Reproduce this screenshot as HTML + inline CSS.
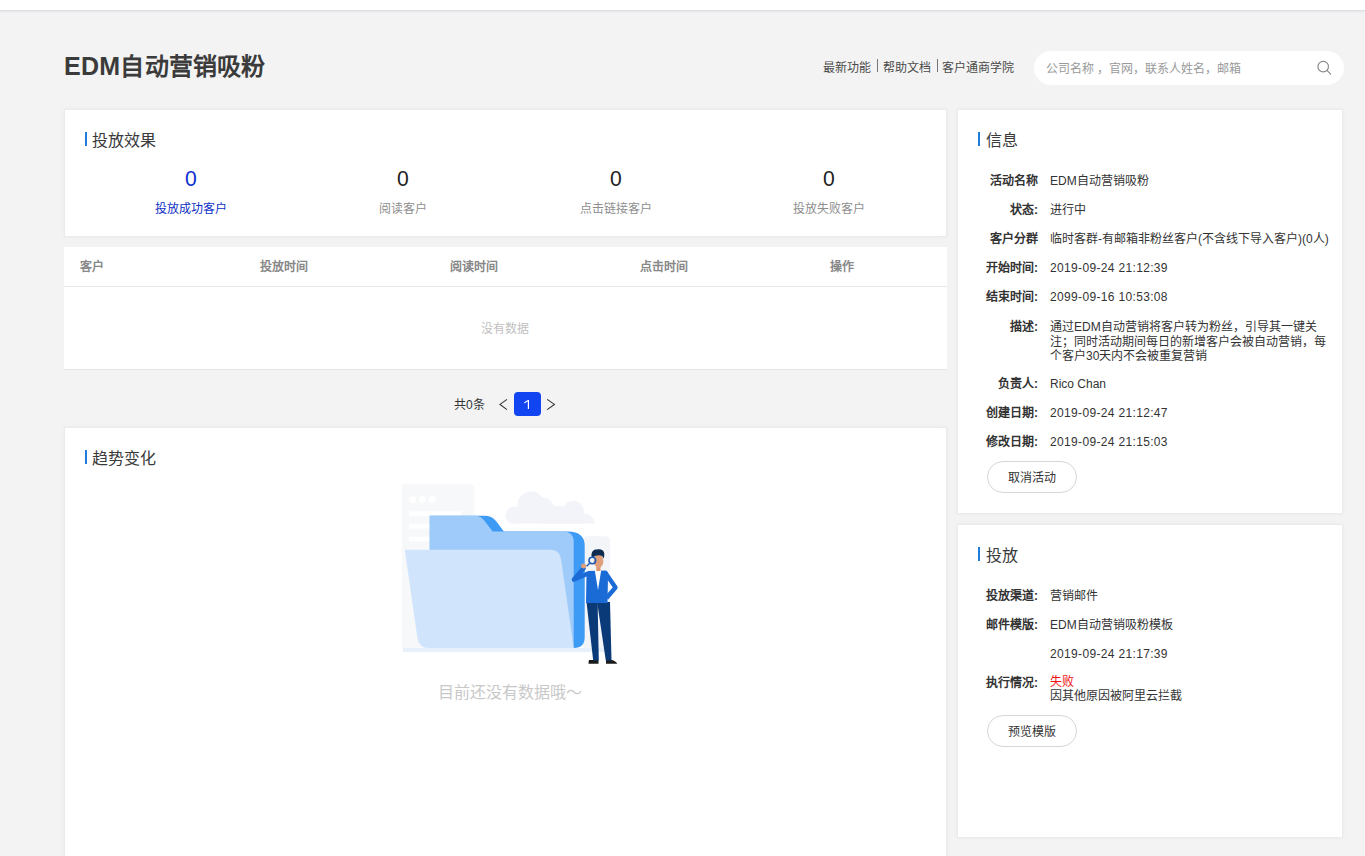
<!DOCTYPE html>
<html lang="zh-CN"><head><meta charset="utf-8">
<style>
*{box-sizing:border-box;margin:0;padding:0}
html,body{width:1365px;height:856px;overflow:hidden;background:#f3f3f3;font-family:"Liberation Sans",sans-serif;color:#333}
.abs{position:absolute}
.topbar{position:absolute;left:0;top:0;width:1365px;height:11px;background:#fff;border-bottom:1px solid #d9dee7;box-shadow:0 1px 3px rgba(0,0,0,0.06)}
.title{position:absolute;left:64px;top:50px;font-size:24px;font-weight:bold;color:#3b3b3b;line-height:34px;white-space:nowrap;letter-spacing:0.2px}
.links{position:absolute;top:60px;font-size:12px;line-height:16px;color:#4a4a4a;white-space:nowrap}
.sep{position:absolute;top:59px;width:1px;height:13px;background:#777}
.search{position:absolute;left:1034px;top:51px;width:310px;height:34px;border-radius:17px;background:#fff}
.search .ph{position:absolute;left:12px;top:10px;font-size:12px;line-height:16px;color:#999;white-space:nowrap}
.card{position:absolute;background:#fff;border:1px solid #ebebeb;box-shadow:0 0 4px rgba(0,0,0,0.04)}
.ct{position:absolute;font-size:16px;line-height:20px;color:#3a3a3a;white-space:nowrap}
.bar{position:absolute;width:2px;height:14px;background:#1f7ddc}
.num{position:absolute;width:212px;text-align:center;font-size:22px;line-height:24px;color:#222;transform:scaleX(0.96)}
.lab{position:absolute;width:212px;text-align:center;font-size:12px;line-height:16px;color:#8e8e8e}
.th{position:absolute;top:259px;font-size:12px;line-height:16px;font-weight:bold;color:#888;white-space:nowrap}
.row{position:absolute;left:958px;width:384px;height:16px;font-size:12px;line-height:16px}
.row .k{position:absolute;right:304px;font-weight:bold;color:#333;white-space:nowrap}
.row .v{position:absolute;left:92px;color:#333;white-space:nowrap}
.btn{position:absolute;left:987px;width:90px;height:32px;border:1px solid #d6d6d6;border-radius:16px;font-size:12px;line-height:32px;text-align:center;color:#333;background:#fff}
</style></head><body>
<div class="topbar"></div>
<div class="title"><span style="font-size:25px;letter-spacing:0.3px;line-height:0">EDM</span>自动营销吸粉</div>
<div class="links" style="left:823px">最新功能</div>
<div class="sep" style="left:877px"></div>
<div class="links" style="left:883px">帮助文档</div>
<div class="sep" style="left:937px"></div>
<div class="links" style="left:942px">客户通商学院</div>
<div class="search"><div class="ph">公司名称 ，官网，联系人姓名，邮箱</div>
<svg class="abs" style="left:282px;top:9px" width="18" height="18" viewBox="0 0 18 18"><circle cx="7.2" cy="6.6" r="5.3" fill="none" stroke="#8a8a8a" stroke-width="1.2"/><line x1="10.9" y1="10.4" x2="14.7" y2="14.2" stroke="#8a8a8a" stroke-width="1.2" stroke-linecap="round"/></svg>
</div>

<!-- card 1 -->
<div class="card" style="left:64px;top:109px;width:883px;height:128px"></div>
<div class="bar" style="left:85px;top:132px"></div>
<div class="ct" style="left:92px;top:131px">投放效果</div>
<div class="num" style="left:85px;top:167px;color:#0b2fcf">0</div>
<div class="num" style="left:297px;top:167px">0</div>
<div class="num" style="left:510px;top:167px">0</div>
<div class="num" style="left:723px;top:167px">0</div>
<div class="lab" style="left:85px;top:201px;color:#0d30c4">投放成功客户</div>
<div class="lab" style="left:297px;top:201px">阅读客户</div>
<div class="lab" style="left:510px;top:201px">点击链接客户</div>
<div class="lab" style="left:723px;top:201px">投放失败客户</div>

<!-- table -->
<div class="abs" style="left:64px;top:247px;width:883px;height:123px;background:#fff;border-bottom:1px solid #e6e6e6"></div>
<div class="abs" style="left:64px;top:286px;width:883px;height:1px;background:#e8e8e8"></div>
<div class="th" style="left:80px">客户</div>
<div class="th" style="left:260px">投放时间</div>
<div class="th" style="left:450px">阅读时间</div>
<div class="th" style="left:640px">点击时间</div>
<div class="th" style="left:830px">操作</div>
<div class="abs" style="left:481px;top:321px;font-size:12px;line-height:16px;color:#bfbfbf">没有数据</div>

<!-- pagination -->
<div class="abs" style="left:454px;top:397px;font-size:12px;line-height:16px;color:#333">共0条</div>
<svg class="abs" style="left:497px;top:397px" width="12" height="18" viewBox="0 0 12 18"><polyline points="10,2.4 3,7.4 10,12.6" fill="none" stroke="#333" stroke-width="1.1"/></svg>
<div class="abs" style="left:514px;top:392px;width:27px;height:24px;border-radius:4px;background:#1145f2"><svg class="abs" style="left:0;top:0" width="27" height="24" viewBox="0 0 27 24"><path d="M13.8,8 L15,8 L15,17 L13.8,17 Z M13.8,8 L10.3,10.2 L10.3,11.4 L13.6,9.5 Z" fill="#fff"/></svg></div>
<svg class="abs" style="left:545px;top:397px" width="12" height="18" viewBox="0 0 12 18"><polyline points="2.2,2.4 9.4,7.4 2.2,12.6" fill="none" stroke="#333" stroke-width="1.1"/></svg>

<!-- card 3 -->
<div class="card" style="left:64px;top:427px;width:883px;height:460px"></div>
<div class="bar" style="left:85px;top:450px"></div>
<div class="ct" style="left:92px;top:449px">趋势变化</div>
<svg class="abs" style="left:390px;top:470px" width="250" height="210" viewBox="0 0 250 210">
<defs><clipPath id="cc"><rect x="0" y="0" width="250" height="53.6"/></clipPath></defs>
<path d="M12,14.3 L79.4,14.3 Q84.4,14.3 84.4,19.3 L84.4,178.6 L12,178.6 Z" fill="#f7f8fa"/>
<circle cx="22.6" cy="29.5" r="3.5" fill="#fff"/><circle cx="32.3" cy="29.5" r="3.5" fill="#fff"/><circle cx="42.1" cy="29.5" r="3.5" fill="#fff"/>
<rect x="19" y="41.4" width="52.4" height="4.4" fill="#fff"/>
<rect x="19" y="53.8" width="52.4" height="4.6" fill="#fff"/>
<rect x="19" y="66.7" width="52.4" height="4.6" fill="#fff"/>
<g clip-path="url(#cc)" fill="#f3f4f9">
<circle cx="124.5" cy="45.5" r="9"/><circle cx="141" cy="35" r="13.5"/><circle cx="153" cy="38.8" r="11"/><circle cx="183.3" cy="41.5" r="10.7"/><circle cx="194.5" cy="54" r="10.3"/><rect x="150" y="36" width="36" height="18"/><rect x="124" y="45" width="71" height="9"/>
</g>
<rect x="193" y="66.3" width="27" height="113" rx="4" fill="#f4f5f9"/>
<path d="M39.8,45.8 L94,45.8 Q102,45.8 106,51 L113.9,61.5 L178,61.5 Q194.7,61.5 194.7,76 L194.7,167 Q194.7,178 184,178 L39.8,178 Z" fill="#3d9af5"/>
<path d="M39.8,45.8 L86,45.8 Q91,46 95,51.5 L102.7,61.5 L173,61.5 Q183.7,61.5 183.7,72 L183.7,178 L39.8,178 Z" fill="#9ecbfa"/>
<path d="M14.8,79.8 L161,79.8 Q170,79.8 171.2,90 L183.7,178 L39,178 Q28.5,178 27.4,168 Z" fill="#d0e5fb"/>
<rect x="13" y="178" width="207" height="4" fill="#e7f0fb"/>
<!-- man -->
<path d="M199,190 L208.5,190 L208.5,193.8 L198.5,193.8 Q198.5,191 199,190 Z" fill="#1b1b1b"/>
<path d="M216,190 L222,190 Q226.5,191.5 227.2,193.8 L216,193.8 Z" fill="#1b1b1b"/>
<path d="M196.5,132 L207.8,132 L207.8,142 L208.8,190.5 L203.2,190.5 Z" fill="#0a3a78"/>
<path d="M207.2,132 L220,132 L221.5,190.5 L215.8,190.5 L208.6,142 Z" fill="#0a3a78"/>
<path d="M198.5,101 L216,100.5 Q218.5,101.5 218,106 L217.5,133 L196,133 L196.5,106 Q197,102 198.5,101 Z" fill="#1b6bd6"/>
<path d="M198,103.5 L184,109.5 L193.5,98.5" fill="none" stroke="#1b6bd6" stroke-width="4.6" stroke-linejoin="round" stroke-linecap="round"/>
<path d="M215.5,103 L225.5,117.5 L216.5,128" fill="none" stroke="#1b6bd6" stroke-width="4.4" stroke-linejoin="round"/>
<path d="M204.8,100.3 L211.2,100.3 L208,120 Z" fill="#fff"/>
<rect x="206.3" y="95" width="4.2" height="6" fill="#d9976f"/>
<ellipse cx="208.6" cy="91" rx="4.8" ry="6.8" fill="#e0a07c"/>
<path d="M201.5,86.5 C201,81.5 204,79 207,79.6 C209.5,78.6 213.2,79.6 214,82.2 C214.6,84.2 214.2,87 213.6,88.5 L212.2,86 C209,84.8 205.5,85 203.2,87.5 Z" fill="#0d2a4f"/>
<circle cx="193.6" cy="96" r="2.5" fill="#e0a07c"/>
<line x1="199.7" y1="93.2" x2="196.6" y2="96.2" stroke="#1e5bb5" stroke-width="1.5"/>
<circle cx="202.3" cy="90.5" r="3.3" fill="none" stroke="#1e5bb5" stroke-width="1.6"/>
</svg>
<div class="abs" style="left:438px;top:683px;font-size:16px;line-height:20px;color:#c8c8c8;white-space:nowrap">目前还没有数据哦～</div>

<!-- right card 1 -->
<div class="card" style="left:957px;top:109px;width:386px;height:405px"></div>
<div class="bar" style="left:978px;top:132px"></div>
<div class="ct" style="left:986px;top:131px">信息</div>
<div class="row" style="top:173px"><span class="k">活动名称</span><span class="v">EDM自动营销吸粉</span></div>
<div class="row" style="top:202px"><span class="k">状态:</span><span class="v">进行中</span></div>
<div class="row" style="top:231px"><span class="k">客户分群</span><span class="v">临时客群-有邮箱非粉丝客户(不含线下导入客户)(0人)</span></div>
<div class="row" style="top:260px"><span class="k">开始时间:</span><span class="v" style="letter-spacing:0.34px">2019-09-24 21:12:39</span></div>
<div class="row" style="top:289px"><span class="k">结束时间:</span><span class="v" style="letter-spacing:0.34px">2099-09-16 10:53:08</span></div>
<div class="row" style="top:319px"><span class="k">描述:</span><span class="v" style="line-height:14.5px;top:1px">通过EDM自动营销将客户转为粉丝，引导其一键关<br>注；同时活动期间每日的新增客户会被自动营销，每<br>个客户30天内不会被重复营销</span></div>
<div class="row" style="top:376px"><span class="k">负责人:</span><span class="v">Rico Chan</span></div>
<div class="row" style="top:405px"><span class="k">创建日期:</span><span class="v" style="letter-spacing:0.34px">2019-09-24 21:12:47</span></div>
<div class="row" style="top:434px"><span class="k">修改日期:</span><span class="v" style="letter-spacing:0.34px">2019-09-24 21:15:03</span></div>
<div class="btn" style="top:461px">取消活动</div>

<!-- right card 2 -->
<div class="card" style="left:957px;top:524px;width:386px;height:314px"></div>
<div class="bar" style="left:978px;top:547px"></div>
<div class="ct" style="left:986px;top:546px">投放</div>
<div class="row" style="top:588px"><span class="k">投放渠道:</span><span class="v">营销邮件</span></div>
<div class="row" style="top:617px"><span class="k">邮件模版:</span><span class="v">EDM自动营销吸粉模板</span></div>
<div class="row" style="top:646px"><span class="v" style="letter-spacing:0.34px">2019-09-24 21:17:39</span></div>
<div class="row" style="top:675px"><span class="k">执行情况:</span><span class="v" style="line-height:14px"><span style="color:#f01010">失败</span><br>因其他原因被阿里云拦截</span></div>
<div class="btn" style="top:715px">预览模版</div>
</body></html>
